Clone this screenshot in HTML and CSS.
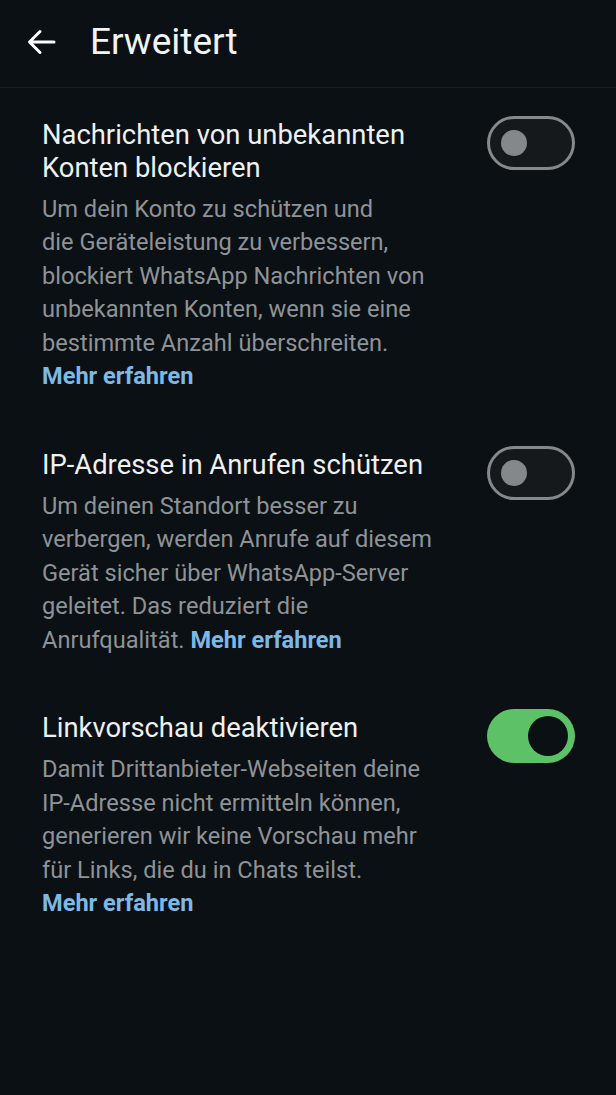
FILE: index.html
```html
<!DOCTYPE html>
<html lang="de">
<head>
<meta charset="utf-8">
<title>Erweitert</title>
<link rel="stylesheet" href="styles.css">
</head>
<body>
<header class="appbar">
  <svg class="back" width="30" height="26" viewBox="0 0 30 26" aria-hidden="true">
    <path d="M28 13H4M14 2.5L3.5 13L14 23.5" fill="none" stroke="#ffffff" stroke-width="3" stroke-linecap="round" stroke-linejoin="round"/>
  </svg>
  <h1 class="title">Erweitert</h1>
</header>
<main class="list">
  <section class="item">
    <div class="text">
      <h2 class="item-title">Nachrichten von unbekannten<br>Konten blockieren</h2>
      <p class="desc">Um dein Konto zu schützen und<br>die Geräteleistung zu verbessern,<br>blockiert WhatsApp Nachrichten von<br>unbekannten Konten, wenn sie eine<br>bestimmte Anzahl überschreiten.<br><a class="link" href="#">Mehr erfahren</a></p>
    </div>
    <div class="switch off"><span class="thumb"></span></div>
  </section>
  <section class="item">
    <div class="text">
      <h2 class="item-title">IP-Adresse in Anrufen schützen</h2>
      <p class="desc">Um deinen Standort besser zu<br>verbergen, werden Anrufe auf diesem<br>Gerät sicher über WhatsApp-Server<br>geleitet. Das reduziert die<br>Anrufqualität. <a class="link" href="#">Mehr erfahren</a></p>
    </div>
    <div class="switch off"><span class="thumb"></span></div>
  </section>
  <section class="item">
    <div class="text">
      <h2 class="item-title">Linkvorschau deaktivieren</h2>
      <p class="desc">Damit Drittanbieter-Webseiten deine<br>IP-Adresse nicht ermitteln können,<br>generieren wir keine Vorschau mehr<br>für Links, die du in Chats teilst.<br><a class="link" href="#">Mehr erfahren</a></p>
    </div>
    <div class="switch on"><span class="thumb"></span></div>
  </section>
</main>
</body>
</html>
```
FILE: styles.css
```css
html, body {
  margin: 0;
  padding: 0;
  background: #0b1014;
  font-family: Roboto, "Noto Sans", "Liberation Sans", sans-serif;
  width: 616px;
  height: 1095px;
  overflow: hidden;
}
.appbar {
  display: flex;
  align-items: center;
  height: 88px;
  padding-left: 26px;
  border-bottom: 1px solid #1b2024;
  box-sizing: border-box;
}
.back {
  display: block;
  margin-top: -4px;
}
.title {
  margin: -4px 0 0 34px;
  font-size: 37px;
  font-weight: 400;
  color: #f1f3f4;
}
.list {
  padding-top: 31px;
}
.item {
  display: flex;
  justify-content: space-between;
  align-items: flex-start;
  padding: 0 42px;
  margin-bottom: 55.5px;
}
.text {
  flex: 1;
}
.item-title {
  margin: 0;
  font-size: 27.4px;
  line-height: 33px;
  font-weight: 400;
  color: #eef0f1;
}
.desc {
  margin: 8px 0 0 0;
  font-size: 23.6px;
  line-height: 33.4px;
  color: #8e9397;
}
.link {
  color: #7cb9e6;
  font-weight: 700;
  text-decoration: none;
}
.switch {
  position: relative;
  width: 88px;
  height: 54px;
  border-radius: 27px;
  box-sizing: border-box;
  flex: none;
  margin-top: -3px;
  margin-right: -1px;
}
.switch.off {
  border: 3px solid #86898c;
  background: #15191c;
}
.switch.on {
  background: #5dc267;
}
.thumb {
  position: absolute;
  border-radius: 50%;
}
.off .thumb {
  width: 26px;
  height: 26px;
  left: 11px;
  top: 11px;
  background: #85888b;
}
.on .thumb {
  width: 40px;
  height: 40px;
  right: 7px;
  top: 7px;
  background: #0b1014;
}
```
